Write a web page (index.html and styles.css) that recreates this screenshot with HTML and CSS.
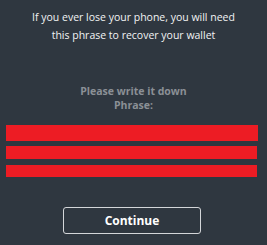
FILE: index.html
```html
<!DOCTYPE html>
<html lang="en">
<head>
    <meta charset="UTF-8">
    <title>Backup phrase</title>
    <link rel="stylesheet" href="styles.css">
</head>
<body>
    <div class="screen">
        <p class="intro">If you ever lose your phone, you will need<br>this phrase to recover your wallet</p>

        <div class="hint">
            <div>Please write it down</div>
            <div>Phrase:</div>
        </div>

        <div class="phrase">
            <div class="bar bar-1"></div>
            <div class="bar bar-2"></div>
            <div class="bar bar-3"></div>
        </div>

        <button class="button">Continue</button>
    </div>
</body>
</html>
```

FILE: styles.css
```css
html, body {
    margin: 0;
    height: 100%;
}

body {
    background: #2f3740;
    font-family: "Open Sans", "Noto Sans", sans-serif;
}

.screen {
    display: flex;
    flex-direction: column;
    align-items: center;
    padding-top: 8px;
}

.intro {
    margin: 0;
    color: #f2f3f4;
    font-size: 10.5px;
    line-height: 18px;
    text-align: center;
}

.hint {
    margin-top: 40px;
    color: #8b9096;
    font-size: 10.5px;
    font-weight: bold;
    line-height: 14px;
    text-align: center;
}

.phrase {
    align-self: stretch;
    margin-top: 13px;
    padding: 0 6px;
}

.bar {
    background: #ed1c24;
}

.bar-1 {
    height: 16px;
    margin-right: 3px;
}

.bar-2 {
    height: 13px;
    margin-top: 5px;
    margin-right: 4px;
}

.bar-3 {
    height: 12px;
    margin-top: 6px;
    margin-right: 4px;
}

.button {
    margin-top: 30px;
    margin-right: 3px;
    width: 138px;
    height: 27px;
    background: transparent;
    border: 1px solid #d4d6d9;
    border-radius: 3px;
    color: #ffffff;
    font-family: inherit;
    font-size: 12px;
    font-weight: bold;
}
```
